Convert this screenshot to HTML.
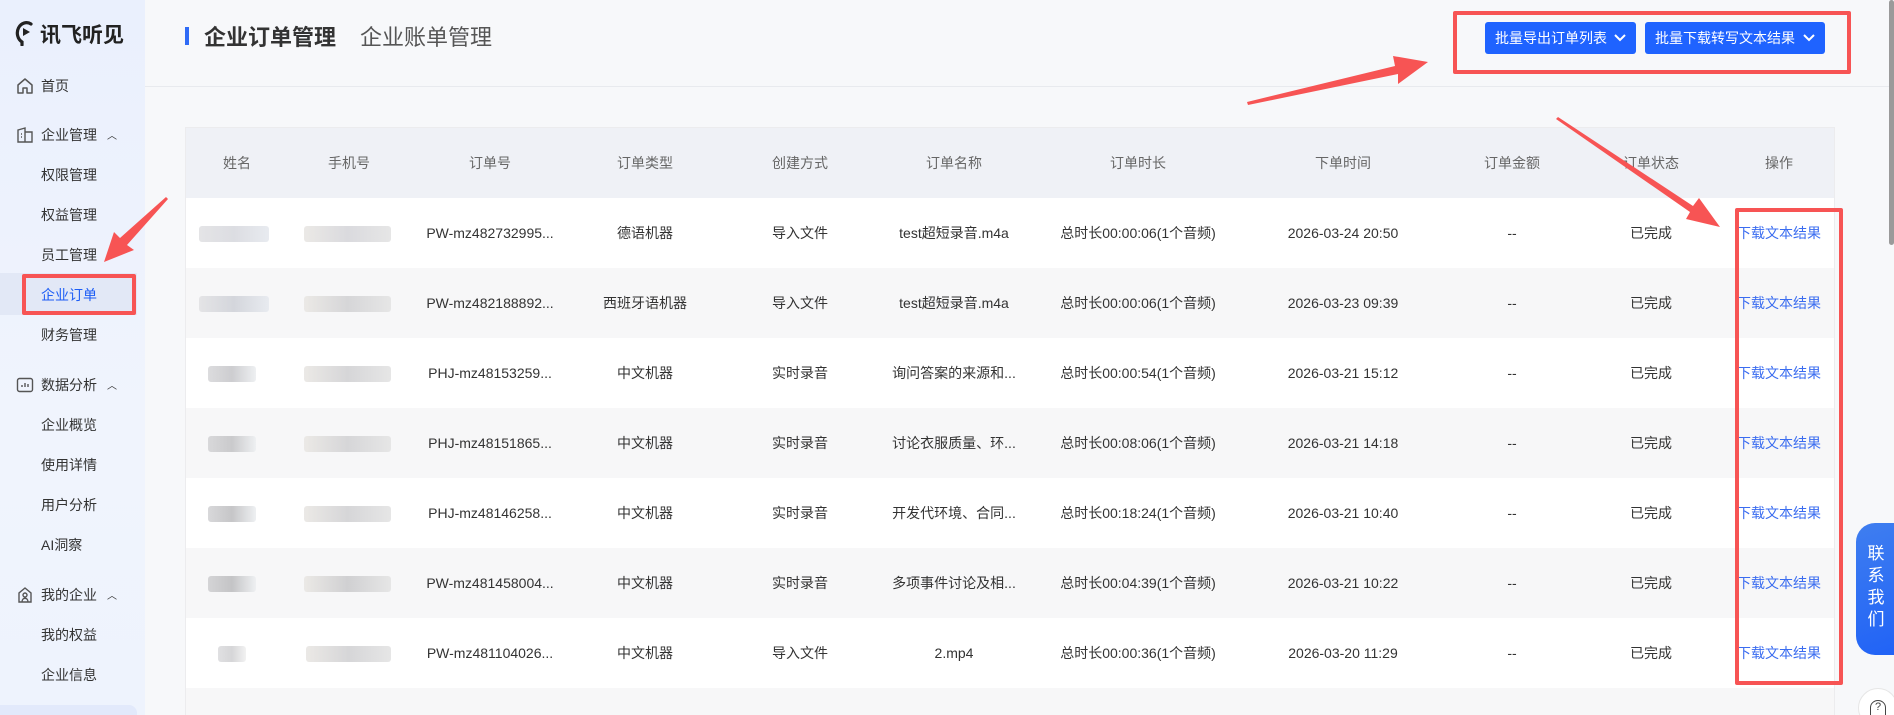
<!DOCTYPE html>
<html style="width:1894px;height:715px;overflow:hidden"><head><meta charset="utf-8"><style>
*{margin:0;padding:0;box-sizing:border-box}
body{width:1894px;height:715px;overflow:hidden;background:#f7f8fa;font-family:"Liberation Sans","Noto Sans CJK SC",sans-serif;position:relative;color:#333}
.side{position:absolute;left:0;top:0;width:145px;height:715px;background:linear-gradient(180deg,#eaf0fd,#f0f4fd 60%,#eef3fd)}
.logo{position:absolute;left:40px;top:19px;font-size:21px;font-weight:bold;color:#222}
.nav{position:absolute;left:41px;font-size:14px;color:#333;line-height:20px}
.grp{position:absolute;left:16px;font-size:14px;color:#333;line-height:20px}
.grp span{margin-left:25px}
.grp i{font-style:normal;font-size:10px;margin-left:10px;position:relative;top:-1px}
.act{position:absolute;left:0;top:273px;width:137px;height:42px;background:#e2e8f6}
.hdr{position:absolute;left:145px;top:0;right:0;height:87px;border-bottom:1px solid #e8eaee}
.bar{position:absolute;left:185px;top:27px;width:4px;height:18px;background:#2f6bf6}
.t1{position:absolute;left:204px;top:20px;font-size:22px;font-weight:bold;color:#333}
.t2{position:absolute;left:360px;top:20px;font-size:22px;color:#555}
.btn{position:absolute;top:22px;height:32px;background:#1f63ff;color:#fff;border-radius:3px;font-size:14px;line-height:32px;padding-left:10px}
.btn svg{position:absolute;right:10px;top:12px}
.tbl{position:absolute;left:185px;top:127px;width:1650px;height:588px;background:#fff;border:1px solid #ececee;border-bottom:none;overflow:hidden}
.row{position:absolute;left:0;width:1650px;height:70px}
.c{position:absolute;top:0;height:70px;line-height:70px;font-size:14px;text-align:center;white-space:nowrap;transform:translateX(-50%)}
.hd .c{color:#666}
.lnk{color:#3a6cf0}
.blur{position:absolute;top:28px;height:16px;border-radius:3px}
.rb{position:absolute;border:4px solid #f75454;border-radius:2px}
</style></head><body>
<div class="side">
 <svg style="position:absolute;left:14px;top:18px" width="22" height="28" viewBox="0 0 22 28"><path d="M17 6 A8 9 0 1 0 8 24 L8 27" fill="none" stroke="#222" stroke-width="3.2" stroke-linecap="round"/><path d="M9 10 L16 14 L9 18Z" fill="#222"/></svg>
 <div class="logo">讯飞听见</div>
 <svg style="position:absolute;left:16px;top:77px" width="18" height="18" viewBox="0 0 18 18"><path d="M2 8 L9 2 L16 8 V16 H11 V11 H7 V16 H2Z" fill="none" stroke="#555" stroke-width="1.5" stroke-linejoin="round"/></svg>
 <div class="nav" style="top:76px">首页</div>
 <svg style="position:absolute;left:16px;top:126px" width="18" height="18" viewBox="0 0 18 18"><path d="M2 4 L9 2 V16 H2Z M9 6 H16 V16 H9 M5 8 H6 M5 11 H6" fill="none" stroke="#555" stroke-width="1.4"/></svg>
 <div class="grp" style="top:125px"><span>企业管理</span><i>︿</i></div>
 <div class="nav" style="top:165px">权限管理</div>
 <div class="nav" style="top:205px">权益管理</div>
 <div class="nav" style="top:245px">员工管理</div>
 <div class="act"></div>
 <div class="nav" style="top:285px;color:#1d5df5">企业订单</div>
 <div class="nav" style="top:325px">财务管理</div>
 <svg style="position:absolute;left:16px;top:376px" width="18" height="18" viewBox="0 0 18 18"><rect x="1.5" y="2.5" width="15" height="13" rx="2" fill="none" stroke="#555" stroke-width="1.4"/><path d="M6 11V9 M9 11V7 M12 11V8" stroke="#555" stroke-width="1.4"/></svg>
 <div class="grp" style="top:375px"><span>数据分析</span><i>︿</i></div>
 <div class="nav" style="top:415px">企业概览</div>
 <div class="nav" style="top:455px">使用详情</div>
 <div class="nav" style="top:495px">用户分析</div>
 <div class="nav" style="top:535px">AI洞察</div>
 <svg style="position:absolute;left:16px;top:586px" width="18" height="18" viewBox="0 0 18 18"><path d="M3 16 V7 L9 2 L15 7 V16Z M6 16 C6 11 12 11 12 16 M9 11 A2 2 0 1 0 9 7 A2 2 0 1 0 9 11" fill="none" stroke="#555" stroke-width="1.4"/></svg>
 <div class="grp" style="top:585px"><span>我的企业</span><i>︿</i></div>
 <div class="nav" style="top:625px">我的权益</div>
 <div class="nav" style="top:665px">企业信息</div>
 <div style="position:absolute;left:0;top:705px;width:137px;height:10px;background:#e2e9fb;border-radius:0 8px 0 0"></div>
</div>
<div class="hdr"></div>
<div class="bar"></div>
<div class="t1">企业订单管理</div>
<div class="t2">企业账单管理</div>
<div class="btn" style="left:1485px;width:151px">批量导出订单列表<svg width="12" height="8" viewBox="0 0 12 8"><path d="M1 1 L6 6 L11 1" fill="none" stroke="#fff" stroke-width="2"/></svg></div>
<div class="btn" style="left:1645px;width:180px">批量下载转写文本结果<svg width="12" height="8" viewBox="0 0 12 8"><path d="M1 1 L6 6 L11 1" fill="none" stroke="#fff" stroke-width="2"/></svg></div>

<div class="tbl">
 <div class="row hd" style="top:0;height:70px;background:#eff1f6">
  <div class="c" style="left:51px">姓名</div><div class="c" style="left:163px">手机号</div><div class="c" style="left:304px">订单号</div><div class="c" style="left:459px">订单类型</div><div class="c" style="left:614px">创建方式</div><div class="c" style="left:768px">订单名称</div><div class="c" style="left:952px">订单时长</div><div class="c" style="left:1157px">下单时间</div><div class="c" style="left:1326px">订单金额</div><div class="c" style="left:1465px">订单状态</div><div class="c" style="left:1593px">操作</div>
 </div>
 <div class="row" style="top:70px;background:#fff"><div class="blur" style="left:13px;width:70px;background:linear-gradient(90deg,#e4e4e6,#dcdde2,#e8ebf0)"></div><div class="blur" style="left:118px;width:87px;background:linear-gradient(90deg,#ebe9e6,#dadade,#e6e6e6)"></div><div class="c" style="left:304px">PW-mz482732995...</div><div class="c" style="left:459px">德语机器</div><div class="c" style="left:614px">导入文件</div><div class="c" style="left:768px">test超短录音.m4a</div><div class="c" style="left:952px">总时长00:00:06(1个音频)</div><div class="c" style="left:1157px">2026-03-24 20:50</div><div class="c" style="left:1326px">--</div><div class="c" style="left:1465px">已完成</div><div class="c lnk" style="left:1593px">下载文本结果</div></div>
 <div class="row" style="top:140px;background:#f7f7f8"><div class="blur" style="left:13px;width:70px;background:linear-gradient(90deg,#e4e4e6,#d4d6dc,#e8ebf0)"></div><div class="blur" style="left:118px;width:87px;background:linear-gradient(90deg,#ebe9e6,#d6d6d8,#e6e6e6)"></div><div class="c" style="left:304px">PW-mz482188892...</div><div class="c" style="left:459px">西班牙语机器</div><div class="c" style="left:614px">导入文件</div><div class="c" style="left:768px">test超短录音.m4a</div><div class="c" style="left:952px">总时长00:00:06(1个音频)</div><div class="c" style="left:1157px">2026-03-23 09:39</div><div class="c" style="left:1326px">--</div><div class="c" style="left:1465px">已完成</div><div class="c lnk" style="left:1593px">下载文本结果</div></div>
 <div class="row" style="top:210px;background:#fff"><div class="blur" style="left:22px;width:48px;background:linear-gradient(90deg,#dcdcde,#cdcdd0,#eef0f2)"></div><div class="blur" style="left:118px;width:87px;background:linear-gradient(90deg,#ebe9e6,#d6d6d8,#e6e6e6)"></div><div class="c" style="left:304px">PHJ-mz48153259...</div><div class="c" style="left:459px">中文机器</div><div class="c" style="left:614px">实时录音</div><div class="c" style="left:768px">询问答案的来源和...</div><div class="c" style="left:952px">总时长00:00:54(1个音频)</div><div class="c" style="left:1157px">2026-03-21 15:12</div><div class="c" style="left:1326px">--</div><div class="c" style="left:1465px">已完成</div><div class="c lnk" style="left:1593px">下载文本结果</div></div>
 <div class="row" style="top:280px;background:#f7f7f8"><div class="blur" style="left:22px;width:48px;background:linear-gradient(90deg,#d8d8da,#cacacc,#eef0f2)"></div><div class="blur" style="left:118px;width:87px;background:linear-gradient(90deg,#ebe9e6,#d6d6d8,#e6e6e6)"></div><div class="c" style="left:304px">PHJ-mz48151865...</div><div class="c" style="left:459px">中文机器</div><div class="c" style="left:614px">实时录音</div><div class="c" style="left:768px">讨论衣服质量、环...</div><div class="c" style="left:952px">总时长00:08:06(1个音频)</div><div class="c" style="left:1157px">2026-03-21 14:18</div><div class="c" style="left:1326px">--</div><div class="c" style="left:1465px">已完成</div><div class="c lnk" style="left:1593px">下载文本结果</div></div>
 <div class="row" style="top:350px;background:#fff"><div class="blur" style="left:22px;width:48px;background:linear-gradient(90deg,#d8d8da,#c6c6c8,#eef0f2)"></div><div class="blur" style="left:118px;width:87px;background:linear-gradient(90deg,#ebe9e6,#d6d6d8,#e6e6e6)"></div><div class="c" style="left:304px">PHJ-mz48146258...</div><div class="c" style="left:459px">中文机器</div><div class="c" style="left:614px">实时录音</div><div class="c" style="left:768px">开发代环境、合同...</div><div class="c" style="left:952px">总时长00:18:24(1个音频)</div><div class="c" style="left:1157px">2026-03-21 10:40</div><div class="c" style="left:1326px">--</div><div class="c" style="left:1465px">已完成</div><div class="c lnk" style="left:1593px">下载文本结果</div></div>
 <div class="row" style="top:420px;background:#f7f7f8"><div class="blur" style="left:22px;width:48px;background:linear-gradient(90deg,#d4d4d6,#c4c4c6,#eef0f2)"></div><div class="blur" style="left:118px;width:87px;background:linear-gradient(90deg,#ebe9e6,#d0d0d2,#e6e6e6)"></div><div class="c" style="left:304px">PW-mz481458004...</div><div class="c" style="left:459px">中文机器</div><div class="c" style="left:614px">实时录音</div><div class="c" style="left:768px">多项事件讨论及相...</div><div class="c" style="left:952px">总时长00:04:39(1个音频)</div><div class="c" style="left:1157px">2026-03-21 10:22</div><div class="c" style="left:1326px">--</div><div class="c" style="left:1465px">已完成</div><div class="c lnk" style="left:1593px">下载文本结果</div></div>
 <div class="row" style="top:490px;background:#fff"><div class="blur" style="left:32px;width:28px;background:linear-gradient(90deg,#e0e0e2,#d6d6d8,#f2f2f2)"></div><div class="blur" style="left:120px;width:85px;background:linear-gradient(90deg,#ebe9e6,#d6d6d8,#e6e6e6)"></div><div class="c" style="left:304px">PW-mz481104026...</div><div class="c" style="left:459px">中文机器</div><div class="c" style="left:614px">导入文件</div><div class="c" style="left:768px">2.mp4</div><div class="c" style="left:952px">总时长00:00:36(1个音频)</div><div class="c" style="left:1157px">2026-03-20 11:29</div><div class="c" style="left:1326px">--</div><div class="c" style="left:1465px">已完成</div><div class="c lnk" style="left:1593px">下载文本结果</div></div>
 <div class="row" style="top:560px;height:28px;background:#f7f7f8"></div>
</div>

<div style="position:absolute;left:1856px;top:523px;width:38px;height:132px;border-radius:19px 0 0 19px;background:linear-gradient(160deg,#3f7ef0,#2163f6);color:#fff;font-size:17px;line-height:22px;text-align:center;padding-top:20px;padding-left:2px">联<br>系<br>我<br>们</div>
<div style="position:absolute;left:1858px;top:688px;width:40px;height:40px;border-radius:50%;background:#fff;border:1px solid #e6e6e6"></div>
<div style="position:absolute;left:1870px;top:700px;width:16px;height:15px;border-radius:50% 50% 0 0;border:1.5px solid #444;border-bottom:none;font-size:11px;line-height:13px;text-align:center;color:#444">?</div>
<div style="position:absolute;left:1889px;top:0;width:5px;height:245px;background:#9a9a9a;border-radius:3px"></div>

<div class="rb" style="left:22px;top:274px;width:114px;height:41px"></div>
<div class="rb" style="left:1453px;top:11px;width:398px;height:63px"></div>
<div class="rb" style="left:1735px;top:208px;width:108px;height:477px"></div>
<svg style="position:absolute;left:0;top:0" width="1894" height="715">
 <g fill="#f75454">
  <polygon points="168,199 166,197 120,238 114,232 104,262 134,250 127,245"/>
  <polygon points="1247,102 1248,105 1398,74 1398,84 1428,62 1393,56 1395,66"/>
  <polygon points="1556,119 1558,117 1693,206 1699,198 1720,227 1686,219 1690,212"/>
 </g>
</svg>
</body></html>
